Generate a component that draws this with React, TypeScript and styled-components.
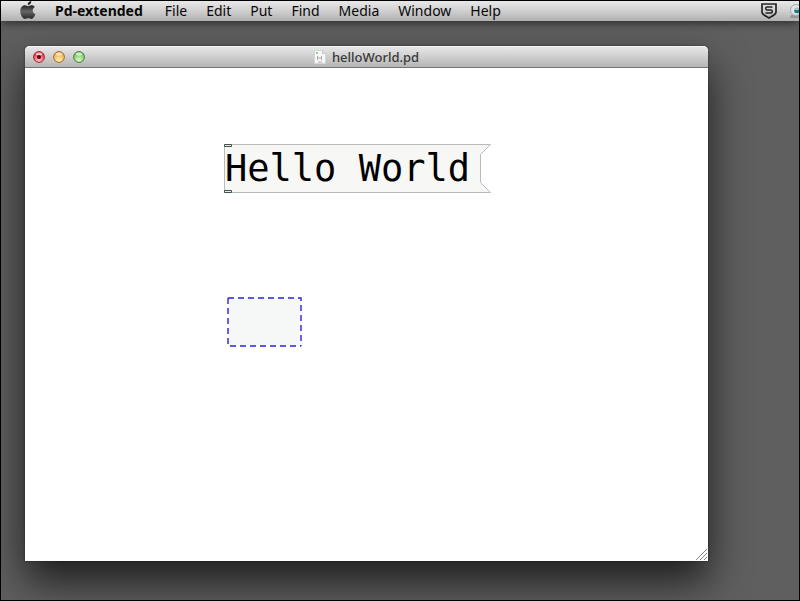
import React from "react";
import styled, { createGlobalStyle } from "styled-components";

const GlobalStyle = createGlobalStyle`
  * { box-sizing: border-box; }
  body { margin: 0; background: #5f5f5f; }
`;

const Desktop = styled.div`
  display: flex;
  flex-direction: column;
  min-height: 100vh;
  overflow: hidden;
  border: 1px solid #000;
  background: #5f5f5f;
  font-family: "Noto Sans", "Open Sans", sans-serif;
`;

const MenuBar = styled.header`
  display: flex;
  align-items: center;
  height: 20px;
  overflow: hidden;
  padding-left: 18px;
  background: linear-gradient(#e8e8e8, #cfcfcf 50%, #b0b0b0);
  box-shadow: 0 1px 10px rgba(0, 0, 0, 0.65);
`;

const Menus = styled.nav`
  display: flex;
  flex: 1;
  gap: 19px;
  margin-left: 18px;
`;

const MenuButton = styled.button<{ $strong?: boolean }>`
  padding: 0;
  margin-right: ${(p) => (p.$strong ? 3 : 0)}px;
  border: 0;
  background: none;
  color: #080808;
  font: ${(p) => (p.$strong ? 700 : 400)} 14px/20px "Noto Sans", "Open Sans", sans-serif;
  white-space: nowrap;
`;

const StatusItems = styled.div`
  display: flex;
  flex: none;
  align-items: center;
  gap: 13px;
  height: 20px;
`;

const Workspace = styled.main`
  display: flex;
  flex: 1;
  padding: 25px 91px 39px 24px;
`;

const Window = styled.section`
  display: flex;
  flex: 1;
  flex-direction: column;
  border-radius: 5px 5px 0 0;
  background: #fff;
  box-shadow: 0 0 2px rgba(0, 0, 0, 0.5), 0 20px 40px rgba(0, 0, 0, 0.7);
`;

const TitleBar = styled.div`
  display: grid;
  grid-template-columns: 1fr auto 1fr;
  align-items: center;
  height: 22px;
  padding: 0 8px;
  border-bottom: 1px solid #747474;
  border-radius: 5px 5px 0 0;
  background: linear-gradient(#e9e9e9, #b5b5b5);
  box-shadow: inset 0 1px #f4f4f4;
`;

const Lights = styled.div`
  display: flex;
  gap: 8px;
`;

const LightButton = styled.button`
  width: 12px;
  height: 12px;
  padding: 0;
  border: 0;
  background: none;

  svg { display: block; }
`;

const Title = styled.h1`
  display: flex;
  align-items: center;
  gap: 6px;
  margin: 0;
  color: #3a3a3a;
  font-size: 13px;
  font-weight: 500;
  line-height: 20px;
`;

const Canvas = styled.div`
  position: relative;
  flex: 1;
`;

const MessageBox = styled.div`
  position: absolute;
  top: 76px;
  left: 199px;
  width: 268px;
  height: 49px;
`;

const Outline = styled.svg`
  position: absolute;
  inset: 0;
`;

const MessageText = styled.span`
  position: relative;
  display: block;
  padding-left: 1px;
  color: #000;
  font: 37px/50px "DejaVu Sans Mono", monospace;
  white-space: pre;
`;

const ObjectBox = styled.svg`
  position: absolute;
  top: 229px;
  left: 202px;
`;

const Grip = styled.svg`
  position: absolute;
  right: 1px;
  bottom: 1px;
`;

const menus = ["File", "Edit", "Put", "Find", "Media", "Window", "Help"];

const lights = [
  { name: "Close", edge: "#a3202b", fill: "#e23c48", glow: "#ffc5c7", dot: true },
  { name: "Minimize", edge: "#a8682a", fill: "#eeae50", glow: "#fff0b5", dot: false },
  { name: "Zoom", edge: "#487d3b", fill: "#79c568", glow: "#d9ffc8", dot: false },
];

function AppleLogo() {
  return (
    <svg width="18" height="20" viewBox="0 0 18 20" aria-label="Apple menu">
      <defs>
        <linearGradient id="apple" x1="0" y1="0" x2="0" y2="1">
          <stop offset="0" stopColor="#222" />
          <stop offset=".45" stopColor="#666" />
          <stop offset="1" stopColor="#292929" />
        </linearGradient>
      </defs>
      <path d="M12.3 0c.2 2.2-1.3 4-3.6 4.1C8.5 2 10.1.3 12.3 0Z" fill="#222" />
      <path
        d="M9 5.2c.9 0 1.9-.9 3.500-.9 1.500 0 2.700.7 3.400 1.700-3.200 1.800-2.700 6 .5 7.200-.9 2.400-2.400 4.700-4 4.700-1.200 0-1.700-.7-3.100-.7-1.500 0-2 .7-3.200.7C3.700 17.900 1.300 13.800 1.300 10.200c0-3.700 2.200-5.900 4.600-5.900 1.400 0 2.300.9 3.100.9Z"
        fill="url(#apple)"
      />
    </svg>
  );
}

function ShieldIcon() {
  return (
    <svg width="16" height="17" viewBox="0 0 16 17" fill="none" stroke="#242424" aria-label="Security">
      <path d="M1 1h14v8c0 2-1.5 3-7 6-5.5-3-7-4-7-6Z" strokeWidth="1.7" />
      <path d="M11.5 4H6Q4.700 4 4.700 5.400T6 6.900h4q1.300 0 1.300 1.500T10 10H4.500" strokeWidth="1.5" />
    </svg>
  );
}

function CameraIcon() {
  return (
    <svg width="9" height="16" viewBox="0 0 9 16" aria-label="Camera">
      <path d="M1 12 9 11v4H0Z" fill="#929798" />
      <circle cx="6" cy="7" r="5.5" fill="#e2e5e6" stroke="#a4aaad" />
      <circle cx="7" cy="7.5" r="3" fill="#a3c4c5" />
      <path d="M4 7h5v3H5Z" fill="#168080" />
    </svg>
  );
}

function DocumentIcon() {
  return (
    <svg width="12" height="14" viewBox="0 0 12 14" aria-hidden="true">
      <path d="M.5.5h8l3 3v10H.5Z" fill="#f6f6f6" stroke="#d5d5d5" />
      <path d="M8.5.5v3h3" fill="#ddd" stroke="#c8c8c8" />
      <path d="M2 3h2" stroke="#8fcf98" strokeWidth="2" />
      <path d="M3.5 6v4M3.5 8h4M7.5 6v4M4 12h4" stroke="#aaa" fill="none" />
    </svg>
  );
}

export default function App() {
  return (
    <Desktop>
      <GlobalStyle />
      <MenuBar>
        <AppleLogo />
        <Menus>
          <MenuButton $strong>Pd-extended</MenuButton>
          {menus.map((m) => (
            <MenuButton key={m}>{m}</MenuButton>
          ))}
        </Menus>
        <StatusItems>
          <ShieldIcon />
          <CameraIcon />
        </StatusItems>
      </MenuBar>
      <Workspace>
        <Window>
          <TitleBar>
            <Lights>
              {lights.map((l) => (
                <LightButton key={l.name} aria-label={l.name}>
                  <svg width="12" height="12" viewBox="0 0 12 12">
                    <defs>
                      <radialGradient id={l.name} cx=".5" cy=".85" r=".7">
                        <stop offset="0" stopColor={l.glow} />
                        <stop offset="1" stopColor={l.fill} />
                      </radialGradient>
                    </defs>
                    <circle cx="6" cy="6" r="5.4" fill={`url(#${l.name})`} stroke={l.edge} />
                    <ellipse cx="6" cy="3" rx="3" ry="1.5" fill="#fff" opacity=".65" />
                    {l.dot && <circle cx="6" cy="6" r="2" fill="#68000c" />}
                  </svg>
                </LightButton>
              ))}
            </Lights>
            <Title>
              <DocumentIcon />
              helloWorld.pd
            </Title>
          </TitleBar>
          <Canvas>
            <MessageBox>
              <Outline width="268" height="49" viewBox="0 0 268 49">
                <path d="M.5.5h266l-10 10v28l10 10H.5Z" fill="#f7f7f6" stroke="#b9bbb9" />
                <path d="M.5.5h7v2h-7ZM.5 46.5h7v2h-7Z" fill="#e7eee9" stroke="#405347" />
              </Outline>
              <MessageText>Hello World</MessageText>
            </MessageBox>
            <ObjectBox width="75" height="50" viewBox="0 0 75 50">
              <rect x="1" y="1" width="73" height="48" fill="#f6f8f7" />
              <path
                d="M1 1h73v48M1 1v48h73"
                fill="none"
                stroke="#2a20e8"
                strokeWidth="1.4"
                strokeDasharray="6 4"
              />
            </ObjectBox>
            <Grip width="11" height="11" viewBox="0 0 11 11" stroke="#858585">
              <path d="M0 11 11 0M4 11l7-7M8 11l3-3" />
            </Grip>
          </Canvas>
        </Window>
      </Workspace>
    </Desktop>
  );
}
